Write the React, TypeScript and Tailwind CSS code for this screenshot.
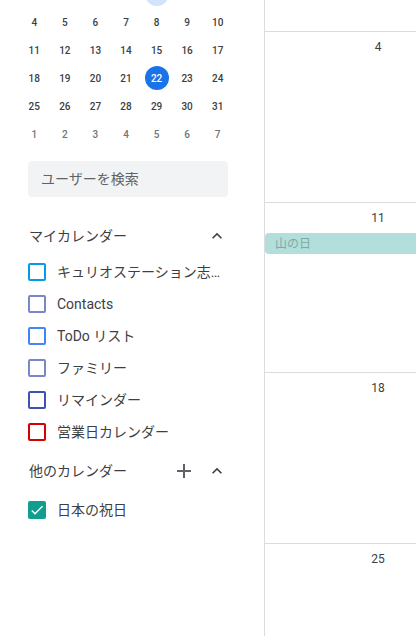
import React from "react";

const weeks: { d: number | null; muted?: boolean }[][] = [
  [null, null, null, null, null, null, null].map((d) => ({ d })),
  [4, 5, 6, 7, 8, 9, 10].map((d) => ({ d })),
  [11, 12, 13, 14, 15, 16, 17].map((d) => ({ d })),
  [18, 19, 20, 21, 22, 23, 24].map((d) => ({ d })),
  [25, 26, 27, 28, 29, 30, 31].map((d) => ({ d })),
  [1, 2, 3, 4, 5, 6, 7].map((d) => ({ d, muted: true })),
];

const myCalendars = [
  { name: "キュリオステーション志津店", color: "#039be5" },
  { name: "Contacts", color: "#7986cb" },
  { name: "ToDo リスト", color: "#4285f4" },
  { name: "ファミリー", color: "#7986cb" },
  { name: "リマインダー", color: "#3f51b5" },
  { name: "営業日カレンダー", color: "#d50000" },
];

const font = "font-['Roboto','Noto_Sans_CJK_JP',sans-serif]";

function ChevronUp() {
  return (
    <svg viewBox="0 0 24 24" className="w-5 h-5 fill-[#3c4043]">
      <path d="M12 8l-6 6 1.41 1.41L12 10.83l4.59 4.58L18 14z" />
    </svg>
  );
}

function PlusIcon() {
  return (
    <svg viewBox="0 0 24 24" className="w-6 h-6 fill-[#5f6368]">
      <path d="M19 13h-6v6h-2v-6H5v-2h6V5h2v6h6v2z" />
    </svg>
  );
}

function CalendarItem({ name, color, checked }: { name: string; color: string; checked?: boolean }) {
  return (
    <div className="flex items-center h-[32px] pl-[28px] pr-[36px]">
      {checked ? (
        <div
          className="w-[18px] h-[18px] rounded-[2px] flex items-center justify-center shrink-0"
          style={{ backgroundColor: color }}
        >
          <svg viewBox="0 0 24 24" className="w-[16px] h-[16px] fill-white">
            <path d="M9 16.17L4.83 12l-1.42 1.41L9 19 21 7l-1.41-1.41z" />
          </svg>
        </div>
      ) : (
        <div
          className="w-[18px] h-[18px] rounded-[2px] border-2 shrink-0"
          style={{ borderColor: color }}
        />
      )}
      <span className="ml-[11px] text-[14px] text-[#3c4043] truncate">{name}</span>
    </div>
  );
}

function Sidebar() {
  return (
    <div className="w-[264px] shrink-0 flex flex-col">
      <div className="-mt-[20px] px-[19px]">
        {weeks.map((week, wi) => (
          <div key={wi} className="grid grid-cols-7 w-[214px] h-[28px]">
            {week.map((c, ci) => {
              const today = wi === 3 && ci === 4;
              const hover = wi === 0 && ci === 4;
              return (
                <div key={ci} className="flex items-center justify-center">
                  <div
                    className={`w-[24px] h-[24px] rounded-full flex items-center justify-center text-[10px] font-medium ${
                      today
                        ? "bg-[#1a73e8] text-white font-bold"
                        : hover
                        ? "bg-[#d2e3fc] text-[#3c4043]"
                        : c.muted
                        ? "text-[#70757a]"
                        : "text-[#3c4043]"
                    }`}
                  >
                    {c.d}
                  </div>
                </div>
              );
            })}
          </div>
        ))}
      </div>

      <div className="mt-[13px] ml-[28px] w-[200px] h-[36px] rounded-[4px] bg-[#f1f3f4] flex items-center px-[13px]">
        <span className="text-[14px] text-[#5f6368]">ユーザーを検索</span>
      </div>

      <div className="mt-[19px] h-[40px] flex items-center justify-between pl-[29px] pr-[37px]">
        <span className="text-[14px] text-[#3c4043]">マイカレンダー</span>
        <ChevronUp />
      </div>
      {myCalendars.map((c) => (
        <CalendarItem key={c.name} name={c.name} color={c.color} />
      ))}

      <div className="h-[46px] flex items-center pl-[29px] pr-[37px]">
        <span className="text-[14px] text-[#3c4043] flex-1">他のカレンダー</span>
        <div className="mr-[11px]">
          <PlusIcon />
        </div>
        <ChevronUp />
      </div>
      <CalendarItem name="日本の祝日" color="#129e8f" checked />
    </div>
  );
}

const days = [
  { n: 4, h: 171 },
  { n: 11, h: 170, event: "山の日" },
  { n: 18, h: 171 },
  { n: 25, h: 171 },
];

function DayColumn() {
  return (
    <div className="flex-1 border-l border-[#dadce0] overflow-hidden">
      <div className="w-[226px]">
        <div className="h-[32px] border-b border-[#dadce0]" />
        {days.map((d) => (
          <div
            key={d.n}
            className="border-b border-[#dadce0] flex flex-col"
            style={{ height: d.h }}
          >
            <div className="h-[30px] pt-[7px] flex justify-center">
              <span className="text-[12px] text-[#3c4043] leading-[16px]">{d.n}</span>
            </div>
            {d.event && (
              <div className="h-[21px] rounded-l-[4px] bg-[#b2dfdb] flex items-center pl-[10px]">
                <span className="text-[12px] text-[#7fa8a4]">{d.event}</span>
              </div>
            )}
          </div>
        ))}
      </div>
    </div>
  );
}

export default function App() {
  return (
    <div className={`w-[416px] h-[636px] overflow-hidden bg-white flex ${font}`}>
      <Sidebar />
      <DayColumn />
    </div>
  );
}
